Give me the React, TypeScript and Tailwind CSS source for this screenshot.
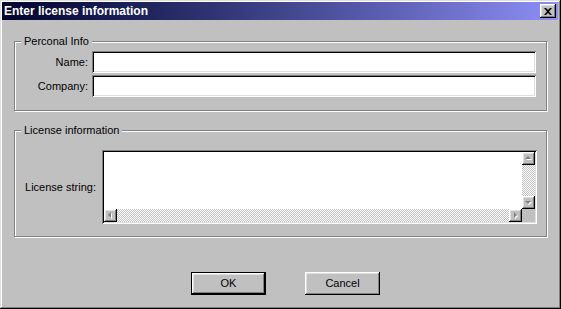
import type { ReactNode } from "react";

/**
 * "Enter license information" — classic Windows 2000 style dialog.
 */

const raised =
  "shadow-[inset_-1px_-1px_#000,inset_1px_1px_#fff,inset_-2px_-2px_#808080,inset_2px_2px_#dfdfdf]";
const sunken =
  "shadow-[inset_1px_1px_#808080,inset_-1px_-1px_#fff,inset_2px_2px_#000,inset_-2px_-2px_#dfdfdf]";
const track =
  "bg-[image:repeating-conic-gradient(#c0c0c0_0_25%,#fff_0_50%)] bg-[length:2px_2px]";

function GroupBox({
  title,
  className,
  children,
}: {
  title: string;
  className: string;
  children: ReactNode;
}) {
  return (
    <div
      className={`relative border border-[#808080] shadow-[inset_1px_1px_#fff,1px_1px_#fff] ${className}`}
    >
      <span className="absolute -top-[8px] left-[6px] bg-[#c0c0c0] px-[3px] leading-[14px]">
        {title}
      </span>
      {children}
    </div>
  );
}

function ScrollButton({ dir }: { dir: "up" | "down" | "left" | "right" }) {
  const pts = {
    up: "6,4 3,7 9,7",
    down: "3,5 9,5 6,8",
    left: "4,6 7,3 7,9",
    right: "5,3 8,6 5,9",
  }[dir];
  return (
    <div className={`h-[13px] w-[13px] shrink-0 bg-[#c0c0c0] ${raised}`}>
      <svg width="13" height="13" viewBox="0 0 13 13" aria-hidden="true">
        <polygon points={pts} fill="#fff" transform="translate(1,1)" />
        <polygon points={pts} fill="#808080" />
      </svg>
    </div>
  );
}

function TextInput() {
  return <div className={`h-[22px] w-[444px] bg-white ${sunken}`} />;
}

export default function App() {
  return (
    <div
      className={`flex h-[309px] w-[561px] flex-col bg-[#c0c0c0] pl-[2px] pr-[3px] pt-[2px] text-[11px] text-black shadow-[inset_-1px_-1px_#000,inset_1px_1px_#dfdfdf,inset_-2px_-2px_#808080,inset_2px_2px_#fff] [font-family:'Liberation_Sans',Arial,sans-serif]`}
    >
      {/* Title bar */}
      <div className="flex h-[18px] items-center justify-between bg-gradient-to-r from-[#04042e] to-[#8e8ef6] pl-[2px] pr-[2px]">
        <span className="text-[12px] font-bold text-white">
          Enter license information
        </span>
        <div
          className={`flex h-[14px] w-[16px] items-center justify-center bg-[#c0c0c0] ${raised}`}
        >
          <svg width="8" height="7" viewBox="0 0 8 7" aria-hidden="true">
            <path
              d="M0 0h2l2 2 2-2h2L5 3.5 8 7H6L4 5 2 7H0l3-3.5z"
              fill="#000"
            />
          </svg>
        </div>
      </div>

      {/* Personal info */}
      <GroupBox title="Perconal Info" className="ml-[12px] mt-[21px] h-[70px] w-[533px]">
        <div className="flex flex-col gap-[2px] pt-[9px]">
          {["Name:", "Company:"].map((label) => (
            <div key={label} className="flex items-center gap-[4px]">
              <span className="w-[73px] text-right">{label}</span>
              <TextInput />
            </div>
          ))}
        </div>
      </GroupBox>

      {/* License info */}
      <GroupBox
        title="License information"
        className="ml-[12px] mt-[19px] h-[107px] w-[533px]"
      >
        <div className="flex items-center gap-[6px] pt-[19px]">
          <span className="w-[81px] text-right">License string:</span>
          <div className={`flex h-[74px] w-[435px] flex-col bg-white p-[2px] ${sunken}`}>
            <div className="flex flex-1">
              <div className="flex-1" />
              <div className="flex w-[13px] flex-col">
                <ScrollButton dir="up" />
                <div className={`flex-1 ${track}`} />
                <ScrollButton dir="down" />
              </div>
            </div>
            <div className="flex h-[13px]">
              <ScrollButton dir="left" />
              <div className={`flex-1 ${track}`} />
              <ScrollButton dir="right" />
              <div className="w-[13px] bg-[#c0c0c0]" />
            </div>
          </div>
        </div>
      </GroupBox>

      {/* Buttons */}
      <div className="ml-[189px] mt-[35px] flex gap-[39px]">
        <button
          className={`flex h-[23px] w-[75px] items-center justify-center border border-black bg-[#c0c0c0] ${raised}`}
        >
          OK
        </button>
        <button
          className={`flex h-[23px] w-[75px] items-center justify-center bg-[#c0c0c0] ${raised}`}
        >
          Cancel
        </button>
      </div>
    </div>
  );
}
